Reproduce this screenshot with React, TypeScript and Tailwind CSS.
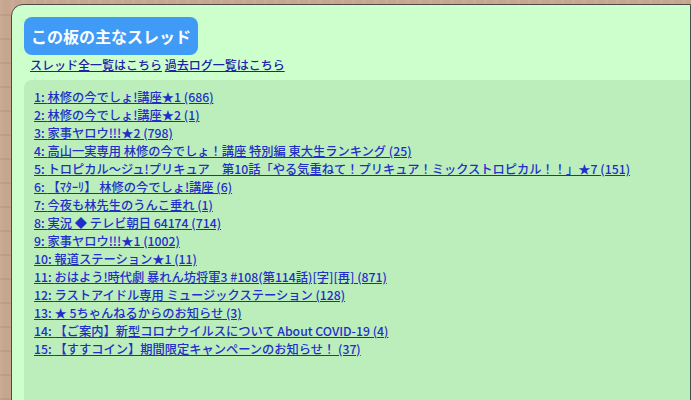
import React from "react";

const threads = [
  "林修の今でしょ!講座★1 (686)",
  "林修の今でしょ!講座★2 (1)",
  "家事ヤロウ!!!★2 (798)",
  "高山一実専用 林修の今でしょ！講座 特別編 東大生ランキング (25)",
  "トロピカル～ジュ!プリキュア　第10話「やる気重ねて！プリキュア！ミックストロピカル！！」★7 (151)",
  "【ﾏﾀｰﾘ】 林修の今でしょ!講座 (6)",
  "今夜も林先生のうんこ垂れ (1)",
  "実況 ◆ テレビ朝日 64174 (714)",
  "家事ヤロウ!!!★1 (1002)",
  "報道ステーション★1 (11)",
  "おはよう!時代劇 暴れん坊将軍3 #108(第114話)[字][再] (871)",
  "ラストアイドル専用 ミュージックステーション (128)",
  "★ 5ちゃんねるからのお知らせ (3)",
  "【ご案内】新型コロナウイルスについて About COVID-19 (4)",
  "【すすコイン】期間限定キャンペーンのお知らせ！ (37)",
];

export default function App() {
  return (
    <div
      className="w-[691px] h-[400px] overflow-hidden bg-[#c6a68f] pt-[4px] pl-[11px]"
      style={{
        fontFamily: '"Noto Sans CJK JP", "Noto Sans", sans-serif',
        backgroundImage:
          "repeating-linear-gradient(0deg, rgba(120,80,60,0.12) 0px, rgba(120,80,60,0.12) 2px, transparent 2px, transparent 24px), repeating-linear-gradient(90deg, rgba(255,255,255,0.06) 0px, rgba(255,255,255,0.06) 3px, transparent 3px, transparent 11px)",
      }}
    >
      <div className="h-[420px] bg-[#ccffcc] border border-[#4a4a4a] rounded-tl-[12px] pt-[12px] pl-[12px]">
        <div className="inline-block bg-[#3f9bf5] text-white font-bold text-[16px] leading-[38px] h-[38px] px-[7px] rounded-[8px]">
          この板の主なスレッド
        </div>
        <div className="text-[12px] leading-[18px] mt-[1px] pl-[6px] text-[#2020a8] font-[500]">
          <a href="#" className="underline">スレッド全一覧はこちら</a>{" "}
          <a href="#" className="underline">過去ログ一覧はこちら</a>
        </div>
        <div className="mt-[6px] bg-[#bbeebb] rounded-tl-[8px] h-[340px] pt-[8px] pl-[10px] text-[12.25px] leading-[18px] font-[500]">
          {threads.map((t, i) => (
            <div key={i}>
              <a href="#" className="underline text-[#1f2fc8]">
                {i + 1}: {t}
              </a>
            </div>
          ))}
        </div>
      </div>
    </div>
  );
}
